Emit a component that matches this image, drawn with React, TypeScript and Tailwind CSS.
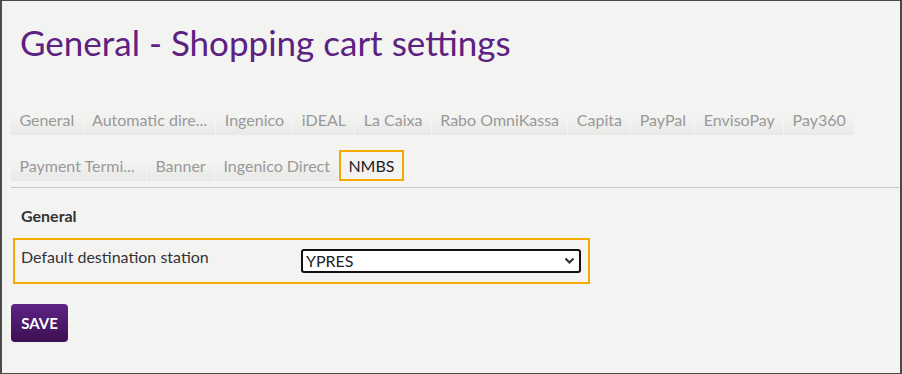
import { useState } from "react";

const tabsRow1 = [
  "General",
  "Automatic dire...",
  "Ingenico",
  "iDEAL",
  "La Caixa",
  "Rabo OmniKassa",
  "Capita",
  "PayPal",
  "EnvisoPay",
  "Pay360",
];

const tabsRow2 = ["Payment Termi...", "Banner", "Ingenico Direct", "NMBS"];

function Tab({ label, active }: { label: string; active?: boolean }) {
  if (active) {
    return (
      <div className="h-[31px] flex items-center px-[7px] border-2 border-[#f5a800] text-[#222] text-[16px]">
        {label}
      </div>
    );
  }
  return (
    <div
      className={
        "h-[31px] flex items-center px-[8.4px] bg-gradient-to-b from-[#f3f3f2] from-40% to-[#e8e8e6] text-[#999] text-[16px]" +
        (label === "Payment Termi..." ? " w-[135px]" : "")
      }
    >
      {label}
    </div>
  );
}

function App() {
  const [station, setStation] = useState("YPRES");

  return (
    <div
      className="w-[902px] h-[374px] bg-[#f3f3f2] border-t border-b border-l-2 border-r-2 border-[#4a4a4a] pl-[9px] pr-[1px] overflow-hidden"
      style={{ fontFamily: "Lato, 'Open Sans', sans-serif" }}
    >
      <h1 className="mt-[20px] ml-[9px] text-[35px] leading-[43px] text-[#5c2181]">
        General - Shopping cart settings
      </h1>

      <div className="mt-[40px] border-b border-[#c8c8c8] pb-[6px]">
        <div className="flex gap-[1px]">
          {tabsRow1.map((t) => (
            <Tab key={t} label={t} />
          ))}
        </div>
        <div className="flex gap-[1px] mt-[15px]">
          {tabsRow2.map((t) => (
            <Tab key={t} label={t} active={t === "NMBS"} />
          ))}
        </div>
      </div>

      <h2 className="mt-[16px] ml-[10px] text-[16px] leading-[24px] font-bold text-[#333]">
        General
      </h2>

      <div className="mt-[10px] ml-[2px] w-[577px] h-[46px] border-2 border-[#f5a800] flex items-start pl-[6px] pt-[7px]">
        <label className="w-[280px] text-[16px] leading-[20px] text-[#333]">
          Default destination station
        </label>
        <div className="relative mt-[2px]">
          <select
            value={station}
            onChange={(e) => setStation(e.target.value)}
            className="appearance-none w-[280px] h-[24px] bg-white border-2 border-[#111] rounded-[3px] pl-[3px] text-[16px] leading-[20px] text-[#222]"
          >
            <option>YPRES</option>
            <option>BRUSSELS</option>
            <option>GENT</option>
          </select>
          <svg
            className="absolute right-[6px] top-[8px] pointer-events-none"
            width="11"
            height="8"
            viewBox="0 0 11 8"
          >
            <path d="M1.5 1.5 L5.5 5.5 L9.5 1.5" fill="none" stroke="#333" strokeWidth="2.2" />
          </svg>
        </div>
      </div>

      <button className="mt-[20px] w-[57px] h-[38px] rounded-[4px] bg-gradient-to-b from-[#5e2387] to-[#3e0f52] text-white font-bold text-[15px]">
        SAVE
      </button>
    </div>
  );
}

export default App;
